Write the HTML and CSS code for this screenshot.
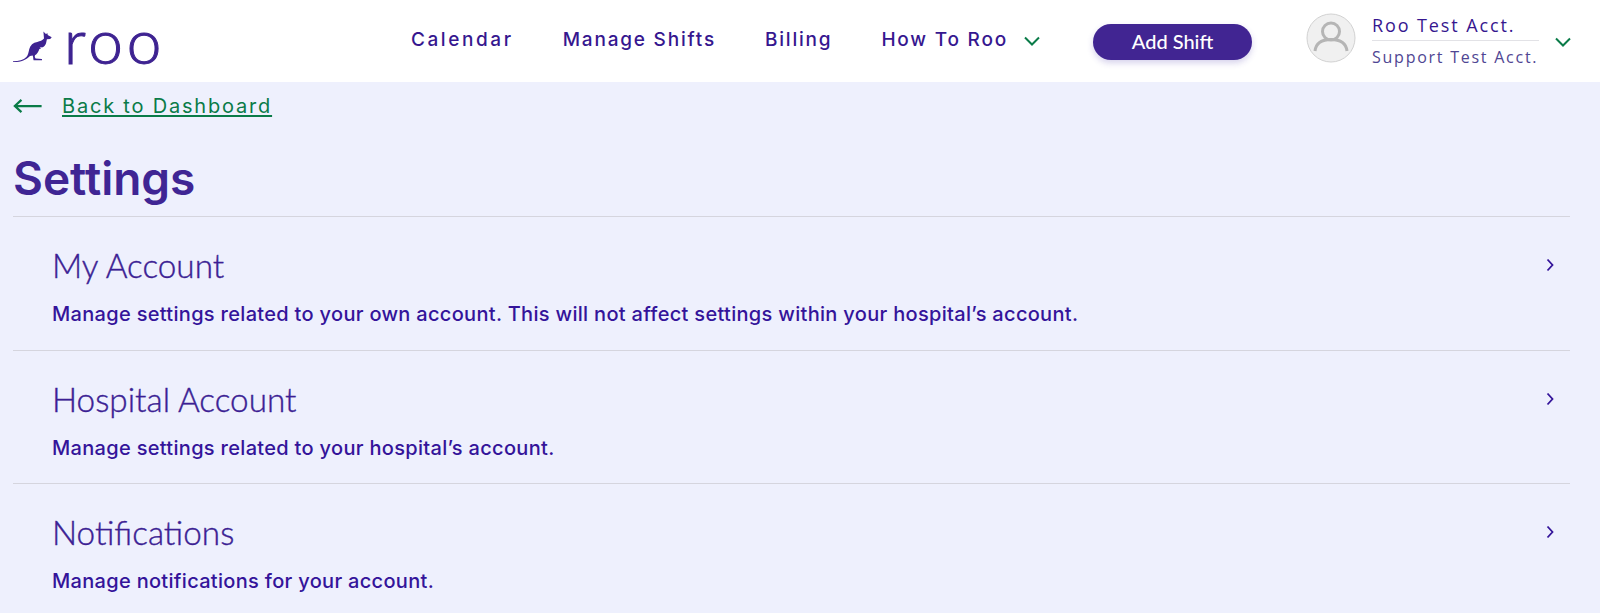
FILE: index.html
```html
<!DOCTYPE html>
<html lang="en">
<head>
<meta charset="utf-8">
<title>Settings</title>
<link rel="stylesheet" href="styles.css">
</head>
<body>
<header class="topbar">
  <a class="logo" href="#">
    <svg class="roo-mark" viewBox="0 0 40 32" width="40" height="32" aria-hidden="true">
      <path d="M0 31.2c6-.1 10.500-1.200 13.400-4.200 1.700-1.800 2.200-4.800 2.900-8 .9-4 3.800-6.400 8-7.100 2.800-.4 5-1.500 6.700-3.300L30.400 1.600l2.500 2.400 1.600-.8.200 1.700 4 2.300-1.500 1.900-3.300.2-.8 3.600c-.4 1.900-1.700 3.300-3.300 4.300l-3.200.2 1.500 1-1.700.5c-1 3.100-2.300 5.100-4.400 6.300-.5 1.300-.2 2.500.6 3.300l6.300.5.2 1.200H20.600l-.3-1.200c0-1.300-.2-2.500-.6-3.500l-2.700.4C13.400 30 7 32.200 0 31.900z"/>
    </svg>
    <span class="wordmark">roo</span>
  </a>
  <nav class="nav">
    <a class="nav-wide" href="#">Calendar</a>
    <a href="#">Manage Shifts</a>
    <a href="#">Billing</a>
    <a class="nav-drop" href="#">How To Roo
      <svg class="chev" viewBox="0 0 16 10" width="16" height="10" aria-hidden="true"><path d="M1 1.500 8 8.500l7-7"/></svg>
    </a>
  </nav>
  <button class="add-shift" type="button">Add Shift</button>
  <div class="user">
    <svg class="avatar" viewBox="0 0 50 50" width="50" height="50" aria-hidden="true">
      <circle class="av-bg" cx="25" cy="25" r="24"/>
      <circle class="av-line" cx="25" cy="18.500" r="8.500"/>
      <path class="av-line" d="M9 38c1-8.500 7.500-11.500 16-11.500S40 29.500 41 38"/>
    </svg>
    <div class="user-names">
      <div class="user-main">Roo Test Acct.</div>
      <div class="user-sub">Support Test Acct.</div>
    </div>
    <svg class="chev" viewBox="0 0 16 10" width="16" height="10" aria-hidden="true"><path d="M1 1.500 8 8.500l7-7"/></svg>
  </div>
</header>
<main class="page">
  <a class="back" href="#">
    <svg viewBox="0 0 32 16" width="30" height="16" aria-hidden="true"><path d="M30.500 8H2M9 1.500 2 8l7 6.500"/></svg>
    <span>Back to Dashboard</span>
  </a>
  <h1 class="title">Settings</h1>
  <section class="row">
    <div class="row-text">
      <h2>My Account</h2>
      <p>Manage settings related to your own account. This will not affect settings within your hospital’s account.</p>
    </div>
    <svg class="arrow" viewBox="0 0 8 14" width="8" height="14" aria-hidden="true"><path d="M1.500 1.500 6.500 7l-5 5.500"/></svg>
  </section>
  <section class="row">
    <div class="row-text">
      <h2>Hospital Account</h2>
      <p>Manage settings related to your hospital’s account.</p>
    </div>
    <svg class="arrow" viewBox="0 0 8 14" width="8" height="14" aria-hidden="true"><path d="M1.500 1.500 6.500 7l-5 5.500"/></svg>
  </section>
  <section class="row">
    <div class="row-text">
      <h2>Notifications</h2>
      <p>Manage notifications for your account.</p>
    </div>
    <svg class="arrow" viewBox="0 0 8 14" width="8" height="14" aria-hidden="true"><path d="M1.500 1.500 6.500 7l-5 5.500"/></svg>
  </section>
</main>
</body>
</html>
```
FILE: styles.css
```css
* { box-sizing: border-box; }
html, body { margin: 0; height: 100%; overflow: hidden; }
body { background: #fff; color: #3c1f94; font-family: "Inter", "Liberation Sans", sans-serif; }
a { color: inherit; text-decoration: none; }

.topbar { height: 82px; display: flex; align-items: center; padding: 0 29px 0 13px; background: #fff; }
.logo { display: flex; align-items: flex-end; gap: 11px; color: #3e2391; }
.roo-mark { fill: #3e2391; margin-bottom: 2px; }
.wordmark { font-family: "Lato", sans-serif; font-size: 62px; line-height: 44px; letter-spacing: 4px; height: 44px; margin-bottom: 2px; font-weight: 300; -webkit-text-stroke: 1px #3e2391; }
.nav { display: flex; align-items: center; gap: 49px; margin-left: auto; font-size: 19px; letter-spacing: 1.800px; font-weight: 500; color: #36178f; margin-top: -4px; }
.nav-wide { letter-spacing: 2.600px; }
.nav-drop { display: flex; align-items: center; gap: 16px; }
.chev { fill: none; stroke: #0a7b48; stroke-width: 2; flex: none; }
.nav-drop .chev { margin-top: 4px; }
.add-shift { margin-left: 53px; width: 159px; height: 36px; margin-top: 2px; padding: 0 0 3px; border: 0; border-radius: 18px; background: #412592; color: #fff; font-family: "Lato", sans-serif; font-size: 20px; font-weight: 500; box-shadow: 0 3px 6px rgba(70, 50, 170, .22); }
.user { display: flex; align-items: center; margin-left: 54px; }
.avatar { flex: none; margin-bottom: 7px; }
.av-bg { fill: #f0f0f0; stroke: #d2d2d2; stroke-width: 1; }
.av-line { fill: none; stroke: #b5b5b5; stroke-width: 3; }
.user-names { width: 167px; margin-left: 16px; margin-right: 16px; font-family: "Open Sans", sans-serif; white-space: nowrap; }
.user-main { font-size: 18px; line-height: 25px; letter-spacing: 1.900px; color: #36178f; border-bottom: 1px solid #e2e2e6; padding-bottom: 2px; margin-top: -2px; }
.user-sub { font-size: 16px; line-height: 22px; letter-spacing: 1.750px; margin-top: 5px; color: #4f4693; }
.user .chev { margin-top: 2px; }

.page { height: calc(100% - 83px); margin-bottom: 1px; background: #eef0fd; padding: 0 30px 0 13px; }
.back { display: inline-flex; align-items: center; gap: 19px; height: 30px; margin-top: 9px; color: #0a7b48; font-size: 20px; letter-spacing: 1.800px; }
.back svg { fill: none; stroke: #0a7b48; stroke-width: 2.400; flex: none; }
.back span { text-decoration: underline; text-underline-offset: 2px; text-decoration-thickness: 1.500px; }
.title { margin: 27px 0 0; font-size: 46px; line-height: 60px; font-weight: 600; color: #3f2594; padding-bottom: 8px; }
.row { display: flex; align-items: flex-start; justify-content: space-between; height: 133.600px; border-top: 1px solid #d5d5de; padding: 0 16px 0 39px; }
.row-text { padding-top: 26px; }
.row h2 { margin: 0; font-family: "Lato", sans-serif; font-size: 33.300px; line-height: 44px; font-weight: 300; color: #3c1f94; -webkit-text-stroke: .4px #3c1f94; }
.row p { margin: 13px 0 0; font-size: 20px; line-height: 28px; font-weight: 500; letter-spacing: .310px; color: #34149a; }
.arrow { fill: none; stroke: #34149a; stroke-width: 1.800; margin-top: 41px; }
```
